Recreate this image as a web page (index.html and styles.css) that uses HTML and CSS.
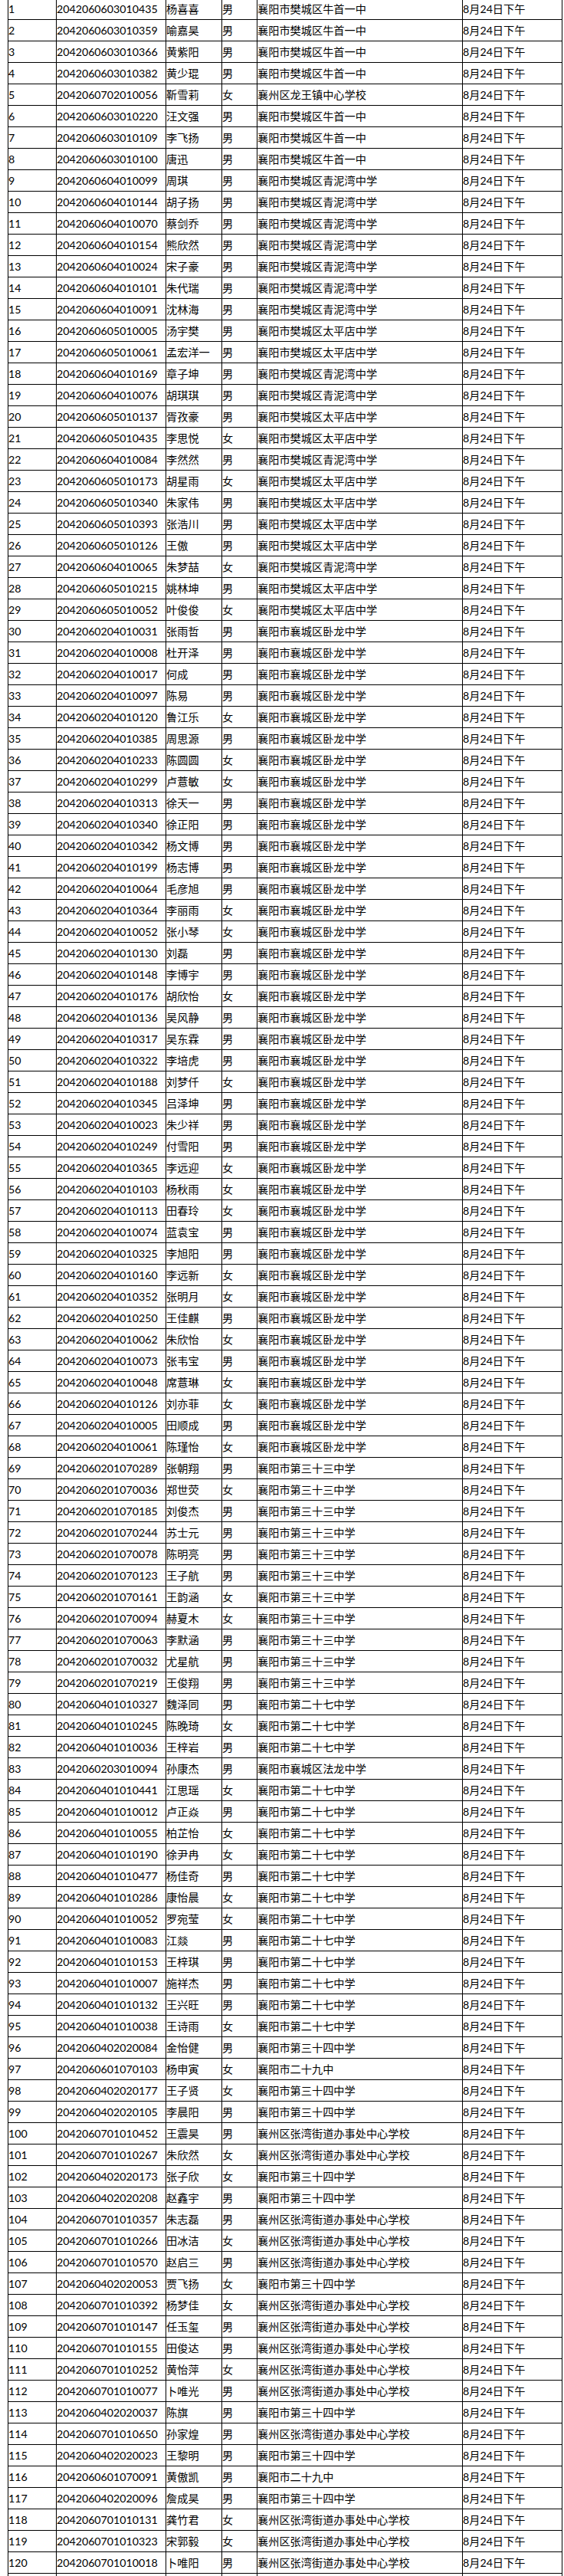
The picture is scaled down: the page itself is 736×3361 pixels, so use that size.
FILE: index.html
```html
<!DOCTYPE html>
<html lang="zh-CN">
<head>
<meta charset="utf-8">
<title>名单</title>
<link rel="stylesheet" href="styles.css">
</head>
<body>
<div class="sheet">
<div class="row"><span>1</span><span>2042060603010435</span><span>杨喜喜</span><span>男</span><span>襄阳市樊城区牛首一中</span><span>8月24日下午</span></div>
<div class="row"><span>2</span><span>2042060603010359</span><span>喻嘉昊</span><span>男</span><span>襄阳市樊城区牛首一中</span><span>8月24日下午</span></div>
<div class="row"><span>3</span><span>2042060603010366</span><span>黄紫阳</span><span>男</span><span>襄阳市樊城区牛首一中</span><span>8月24日下午</span></div>
<div class="row"><span>4</span><span>2042060603010382</span><span>黄少琨</span><span>男</span><span>襄阳市樊城区牛首一中</span><span>8月24日下午</span></div>
<div class="row"><span>5</span><span>2042060702010056</span><span>靳雪莉</span><span>女</span><span>襄州区龙王镇中心学校</span><span>8月24日下午</span></div>
<div class="row"><span>6</span><span>2042060603010220</span><span>汪文强</span><span>男</span><span>襄阳市樊城区牛首一中</span><span>8月24日下午</span></div>
<div class="row"><span>7</span><span>2042060603010109</span><span>李飞扬</span><span>男</span><span>襄阳市樊城区牛首一中</span><span>8月24日下午</span></div>
<div class="row"><span>8</span><span>2042060603010100</span><span>唐迅</span><span>男</span><span>襄阳市樊城区牛首一中</span><span>8月24日下午</span></div>
<div class="row"><span>9</span><span>2042060604010099</span><span>周琪</span><span>男</span><span>襄阳市樊城区青泥湾中学</span><span>8月24日下午</span></div>
<div class="row"><span>10</span><span>2042060604010144</span><span>胡子扬</span><span>男</span><span>襄阳市樊城区青泥湾中学</span><span>8月24日下午</span></div>
<div class="row"><span>11</span><span>2042060604010070</span><span>蔡剑乔</span><span>男</span><span>襄阳市樊城区青泥湾中学</span><span>8月24日下午</span></div>
<div class="row"><span>12</span><span>2042060604010154</span><span>熊欣然</span><span>男</span><span>襄阳市樊城区青泥湾中学</span><span>8月24日下午</span></div>
<div class="row"><span>13</span><span>2042060604010024</span><span>宋子豪</span><span>男</span><span>襄阳市樊城区青泥湾中学</span><span>8月24日下午</span></div>
<div class="row"><span>14</span><span>2042060604010101</span><span>朱代瑞</span><span>男</span><span>襄阳市樊城区青泥湾中学</span><span>8月24日下午</span></div>
<div class="row"><span>15</span><span>2042060604010091</span><span>沈林海</span><span>男</span><span>襄阳市樊城区青泥湾中学</span><span>8月24日下午</span></div>
<div class="row"><span>16</span><span>2042060605010005</span><span>汤宇樊</span><span>男</span><span>襄阳市樊城区太平店中学</span><span>8月24日下午</span></div>
<div class="row"><span>17</span><span>2042060605010061</span><span>孟宏洋一</span><span>男</span><span>襄阳市樊城区太平店中学</span><span>8月24日下午</span></div>
<div class="row"><span>18</span><span>2042060604010169</span><span>章子坤</span><span>男</span><span>襄阳市樊城区青泥湾中学</span><span>8月24日下午</span></div>
<div class="row"><span>19</span><span>2042060604010076</span><span>胡琪琪</span><span>男</span><span>襄阳市樊城区青泥湾中学</span><span>8月24日下午</span></div>
<div class="row"><span>20</span><span>2042060605010137</span><span>胥孜豪</span><span>男</span><span>襄阳市樊城区太平店中学</span><span>8月24日下午</span></div>
<div class="row"><span>21</span><span>2042060605010435</span><span>李思悦</span><span>女</span><span>襄阳市樊城区太平店中学</span><span>8月24日下午</span></div>
<div class="row"><span>22</span><span>2042060604010084</span><span>李然然</span><span>男</span><span>襄阳市樊城区青泥湾中学</span><span>8月24日下午</span></div>
<div class="row"><span>23</span><span>2042060605010173</span><span>胡星雨</span><span>女</span><span>襄阳市樊城区太平店中学</span><span>8月24日下午</span></div>
<div class="row"><span>24</span><span>2042060605010340</span><span>朱家伟</span><span>男</span><span>襄阳市樊城区太平店中学</span><span>8月24日下午</span></div>
<div class="row"><span>25</span><span>2042060605010393</span><span>张浩川</span><span>男</span><span>襄阳市樊城区太平店中学</span><span>8月24日下午</span></div>
<div class="row"><span>26</span><span>2042060605010126</span><span>王傲</span><span>男</span><span>襄阳市樊城区太平店中学</span><span>8月24日下午</span></div>
<div class="row"><span>27</span><span>2042060604010065</span><span>朱梦喆</span><span>女</span><span>襄阳市樊城区青泥湾中学</span><span>8月24日下午</span></div>
<div class="row"><span>28</span><span>2042060605010215</span><span>姚林坤</span><span>男</span><span>襄阳市樊城区太平店中学</span><span>8月24日下午</span></div>
<div class="row"><span>29</span><span>2042060605010052</span><span>叶俊俊</span><span>女</span><span>襄阳市樊城区太平店中学</span><span>8月24日下午</span></div>
<div class="row"><span>30</span><span>2042060204010031</span><span>张雨哲</span><span>男</span><span>襄阳市襄城区卧龙中学</span><span>8月24日下午</span></div>
<div class="row"><span>31</span><span>2042060204010008</span><span>杜开泽</span><span>男</span><span>襄阳市襄城区卧龙中学</span><span>8月24日下午</span></div>
<div class="row"><span>32</span><span>2042060204010017</span><span>何成</span><span>男</span><span>襄阳市襄城区卧龙中学</span><span>8月24日下午</span></div>
<div class="row"><span>33</span><span>2042060204010097</span><span>陈易</span><span>男</span><span>襄阳市襄城区卧龙中学</span><span>8月24日下午</span></div>
<div class="row"><span>34</span><span>2042060204010120</span><span>鲁江乐</span><span>女</span><span>襄阳市襄城区卧龙中学</span><span>8月24日下午</span></div>
<div class="row"><span>35</span><span>2042060204010385</span><span>周思源</span><span>男</span><span>襄阳市襄城区卧龙中学</span><span>8月24日下午</span></div>
<div class="row"><span>36</span><span>2042060204010233</span><span>陈圆圆</span><span>女</span><span>襄阳市襄城区卧龙中学</span><span>8月24日下午</span></div>
<div class="row"><span>37</span><span>2042060204010299</span><span>卢薏敏</span><span>女</span><span>襄阳市襄城区卧龙中学</span><span>8月24日下午</span></div>
<div class="row"><span>38</span><span>2042060204010313</span><span>徐天一</span><span>男</span><span>襄阳市襄城区卧龙中学</span><span>8月24日下午</span></div>
<div class="row"><span>39</span><span>2042060204010340</span><span>徐正阳</span><span>男</span><span>襄阳市襄城区卧龙中学</span><span>8月24日下午</span></div>
<div class="row"><span>40</span><span>2042060204010342</span><span>杨文博</span><span>男</span><span>襄阳市襄城区卧龙中学</span><span>8月24日下午</span></div>
<div class="row"><span>41</span><span>2042060204010199</span><span>杨志博</span><span>男</span><span>襄阳市襄城区卧龙中学</span><span>8月24日下午</span></div>
<div class="row"><span>42</span><span>2042060204010064</span><span>毛彦旭</span><span>男</span><span>襄阳市襄城区卧龙中学</span><span>8月24日下午</span></div>
<div class="row"><span>43</span><span>2042060204010364</span><span>李丽雨</span><span>女</span><span>襄阳市襄城区卧龙中学</span><span>8月24日下午</span></div>
<div class="row"><span>44</span><span>2042060204010052</span><span>张小琴</span><span>女</span><span>襄阳市襄城区卧龙中学</span><span>8月24日下午</span></div>
<div class="row"><span>45</span><span>2042060204010130</span><span>刘磊</span><span>男</span><span>襄阳市襄城区卧龙中学</span><span>8月24日下午</span></div>
<div class="row"><span>46</span><span>2042060204010148</span><span>李博宇</span><span>男</span><span>襄阳市襄城区卧龙中学</span><span>8月24日下午</span></div>
<div class="row"><span>47</span><span>2042060204010176</span><span>胡欣怡</span><span>女</span><span>襄阳市襄城区卧龙中学</span><span>8月24日下午</span></div>
<div class="row"><span>48</span><span>2042060204010136</span><span>吴风静</span><span>男</span><span>襄阳市襄城区卧龙中学</span><span>8月24日下午</span></div>
<div class="row"><span>49</span><span>2042060204010317</span><span>吴东霖</span><span>男</span><span>襄阳市襄城区卧龙中学</span><span>8月24日下午</span></div>
<div class="row"><span>50</span><span>2042060204010322</span><span>李培虎</span><span>男</span><span>襄阳市襄城区卧龙中学</span><span>8月24日下午</span></div>
<div class="row"><span>51</span><span>2042060204010188</span><span>刘梦仟</span><span>女</span><span>襄阳市襄城区卧龙中学</span><span>8月24日下午</span></div>
<div class="row"><span>52</span><span>2042060204010345</span><span>吕泽坤</span><span>男</span><span>襄阳市襄城区卧龙中学</span><span>8月24日下午</span></div>
<div class="row"><span>53</span><span>2042060204010023</span><span>朱少祥</span><span>男</span><span>襄阳市襄城区卧龙中学</span><span>8月24日下午</span></div>
<div class="row"><span>54</span><span>2042060204010249</span><span>付雪阳</span><span>男</span><span>襄阳市襄城区卧龙中学</span><span>8月24日下午</span></div>
<div class="row"><span>55</span><span>2042060204010365</span><span>李远迎</span><span>女</span><span>襄阳市襄城区卧龙中学</span><span>8月24日下午</span></div>
<div class="row"><span>56</span><span>2042060204010103</span><span>杨秋雨</span><span>女</span><span>襄阳市襄城区卧龙中学</span><span>8月24日下午</span></div>
<div class="row"><span>57</span><span>2042060204010113</span><span>田春玲</span><span>女</span><span>襄阳市襄城区卧龙中学</span><span>8月24日下午</span></div>
<div class="row"><span>58</span><span>2042060204010074</span><span>蓝袁宝</span><span>男</span><span>襄阳市襄城区卧龙中学</span><span>8月24日下午</span></div>
<div class="row"><span>59</span><span>2042060204010325</span><span>李旭阳</span><span>男</span><span>襄阳市襄城区卧龙中学</span><span>8月24日下午</span></div>
<div class="row"><span>60</span><span>2042060204010160</span><span>李远新</span><span>女</span><span>襄阳市襄城区卧龙中学</span><span>8月24日下午</span></div>
<div class="row"><span>61</span><span>2042060204010352</span><span>张明月</span><span>女</span><span>襄阳市襄城区卧龙中学</span><span>8月24日下午</span></div>
<div class="row"><span>62</span><span>2042060204010250</span><span>王佳麒</span><span>男</span><span>襄阳市襄城区卧龙中学</span><span>8月24日下午</span></div>
<div class="row"><span>63</span><span>2042060204010062</span><span>朱欣怡</span><span>女</span><span>襄阳市襄城区卧龙中学</span><span>8月24日下午</span></div>
<div class="row"><span>64</span><span>2042060204010073</span><span>张韦宝</span><span>男</span><span>襄阳市襄城区卧龙中学</span><span>8月24日下午</span></div>
<div class="row"><span>65</span><span>2042060204010048</span><span>席薏琳</span><span>女</span><span>襄阳市襄城区卧龙中学</span><span>8月24日下午</span></div>
<div class="row"><span>66</span><span>2042060204010126</span><span>刘亦菲</span><span>女</span><span>襄阳市襄城区卧龙中学</span><span>8月24日下午</span></div>
<div class="row"><span>67</span><span>2042060204010005</span><span>田顺成</span><span>男</span><span>襄阳市襄城区卧龙中学</span><span>8月24日下午</span></div>
<div class="row"><span>68</span><span>2042060204010061</span><span>陈瑾怡</span><span>女</span><span>襄阳市襄城区卧龙中学</span><span>8月24日下午</span></div>
<div class="row"><span>69</span><span>2042060201070289</span><span>张朝翔</span><span>男</span><span>襄阳市第三十三中学</span><span>8月24日下午</span></div>
<div class="row"><span>70</span><span>2042060201070036</span><span>郑世荧</span><span>女</span><span>襄阳市第三十三中学</span><span>8月24日下午</span></div>
<div class="row"><span>71</span><span>2042060201070185</span><span>刘俊杰</span><span>男</span><span>襄阳市第三十三中学</span><span>8月24日下午</span></div>
<div class="row"><span>72</span><span>2042060201070244</span><span>苏士元</span><span>男</span><span>襄阳市第三十三中学</span><span>8月24日下午</span></div>
<div class="row"><span>73</span><span>2042060201070078</span><span>陈明亮</span><span>男</span><span>襄阳市第三十三中学</span><span>8月24日下午</span></div>
<div class="row"><span>74</span><span>2042060201070123</span><span>王子航</span><span>男</span><span>襄阳市第三十三中学</span><span>8月24日下午</span></div>
<div class="row"><span>75</span><span>2042060201070161</span><span>王韵涵</span><span>女</span><span>襄阳市第三十三中学</span><span>8月24日下午</span></div>
<div class="row"><span>76</span><span>2042060201070094</span><span>赫夏木</span><span>女</span><span>襄阳市第三十三中学</span><span>8月24日下午</span></div>
<div class="row"><span>77</span><span>2042060201070063</span><span>李默涵</span><span>男</span><span>襄阳市第三十三中学</span><span>8月24日下午</span></div>
<div class="row"><span>78</span><span>2042060201070032</span><span>尤星航</span><span>男</span><span>襄阳市第三十三中学</span><span>8月24日下午</span></div>
<div class="row"><span>79</span><span>2042060201070219</span><span>王俊翔</span><span>男</span><span>襄阳市第三十三中学</span><span>8月24日下午</span></div>
<div class="row"><span>80</span><span>2042060401010327</span><span>魏泽同</span><span>男</span><span>襄阳市第二十七中学</span><span>8月24日下午</span></div>
<div class="row"><span>81</span><span>2042060401010245</span><span>陈晚琦</span><span>女</span><span>襄阳市第二十七中学</span><span>8月24日下午</span></div>
<div class="row"><span>82</span><span>2042060401010036</span><span>王梓岩</span><span>男</span><span>襄阳市第二十七中学</span><span>8月24日下午</span></div>
<div class="row"><span>83</span><span>2042060203010094</span><span>孙康杰</span><span>男</span><span>襄阳市襄城区法龙中学</span><span>8月24日下午</span></div>
<div class="row"><span>84</span><span>2042060401010441</span><span>江思瑶</span><span>女</span><span>襄阳市第二十七中学</span><span>8月24日下午</span></div>
<div class="row"><span>85</span><span>2042060401010012</span><span>卢正焱</span><span>男</span><span>襄阳市第二十七中学</span><span>8月24日下午</span></div>
<div class="row"><span>86</span><span>2042060401010055</span><span>柏芷怡</span><span>女</span><span>襄阳市第二十七中学</span><span>8月24日下午</span></div>
<div class="row"><span>87</span><span>2042060401010190</span><span>徐尹冉</span><span>女</span><span>襄阳市第二十七中学</span><span>8月24日下午</span></div>
<div class="row"><span>88</span><span>2042060401010477</span><span>杨佳奇</span><span>男</span><span>襄阳市第二十七中学</span><span>8月24日下午</span></div>
<div class="row"><span>89</span><span>2042060401010286</span><span>康怡晨</span><span>女</span><span>襄阳市第二十七中学</span><span>8月24日下午</span></div>
<div class="row"><span>90</span><span>2042060401010052</span><span>罗宛莹</span><span>女</span><span>襄阳市第二十七中学</span><span>8月24日下午</span></div>
<div class="row"><span>91</span><span>2042060401010083</span><span>江燚</span><span>男</span><span>襄阳市第二十七中学</span><span>8月24日下午</span></div>
<div class="row"><span>92</span><span>2042060401010153</span><span>王梓琪</span><span>男</span><span>襄阳市第二十七中学</span><span>8月24日下午</span></div>
<div class="row"><span>93</span><span>2042060401010007</span><span>施祥杰</span><span>男</span><span>襄阳市第二十七中学</span><span>8月24日下午</span></div>
<div class="row"><span>94</span><span>2042060401010132</span><span>王兴旺</span><span>男</span><span>襄阳市第二十七中学</span><span>8月24日下午</span></div>
<div class="row"><span>95</span><span>2042060401010038</span><span>王诗雨</span><span>女</span><span>襄阳市第二十七中学</span><span>8月24日下午</span></div>
<div class="row"><span>96</span><span>2042060402020084</span><span>金怡健</span><span>男</span><span>襄阳市第三十四中学</span><span>8月24日下午</span></div>
<div class="row"><span>97</span><span>2042060601070103</span><span>杨申寅</span><span>女</span><span>襄阳市二十九中</span><span>8月24日下午</span></div>
<div class="row"><span>98</span><span>2042060402020177</span><span>王子贤</span><span>女</span><span>襄阳市第三十四中学</span><span>8月24日下午</span></div>
<div class="row"><span>99</span><span>2042060402020105</span><span>李晨阳</span><span>男</span><span>襄阳市第三十四中学</span><span>8月24日下午</span></div>
<div class="row"><span>100</span><span>2042060701010452</span><span>王震昊</span><span>男</span><span>襄州区张湾街道办事处中心学校</span><span>8月24日下午</span></div>
<div class="row"><span>101</span><span>2042060701010267</span><span>朱欣然</span><span>女</span><span>襄州区张湾街道办事处中心学校</span><span>8月24日下午</span></div>
<div class="row"><span>102</span><span>2042060402020173</span><span>张子欣</span><span>女</span><span>襄阳市第三十四中学</span><span>8月24日下午</span></div>
<div class="row"><span>103</span><span>2042060402020208</span><span>赵鑫宇</span><span>男</span><span>襄阳市第三十四中学</span><span>8月24日下午</span></div>
<div class="row"><span>104</span><span>2042060701010357</span><span>朱志磊</span><span>男</span><span>襄州区张湾街道办事处中心学校</span><span>8月24日下午</span></div>
<div class="row"><span>105</span><span>2042060701010266</span><span>田冰洁</span><span>女</span><span>襄州区张湾街道办事处中心学校</span><span>8月24日下午</span></div>
<div class="row"><span>106</span><span>2042060701010570</span><span>赵启三</span><span>男</span><span>襄州区张湾街道办事处中心学校</span><span>8月24日下午</span></div>
<div class="row"><span>107</span><span>2042060402020053</span><span>贾飞扬</span><span>女</span><span>襄阳市第三十四中学</span><span>8月24日下午</span></div>
<div class="row"><span>108</span><span>2042060701010392</span><span>杨梦佳</span><span>女</span><span>襄州区张湾街道办事处中心学校</span><span>8月24日下午</span></div>
<div class="row"><span>109</span><span>2042060701010147</span><span>任玉玺</span><span>男</span><span>襄州区张湾街道办事处中心学校</span><span>8月24日下午</span></div>
<div class="row"><span>110</span><span>2042060701010155</span><span>田俊达</span><span>男</span><span>襄州区张湾街道办事处中心学校</span><span>8月24日下午</span></div>
<div class="row"><span>111</span><span>2042060701010252</span><span>黄怡萍</span><span>女</span><span>襄州区张湾街道办事处中心学校</span><span>8月24日下午</span></div>
<div class="row"><span>112</span><span>2042060701010077</span><span>卜唯光</span><span>男</span><span>襄州区张湾街道办事处中心学校</span><span>8月24日下午</span></div>
<div class="row"><span>113</span><span>2042060402020037</span><span>陈旗</span><span>男</span><span>襄阳市第三十四中学</span><span>8月24日下午</span></div>
<div class="row"><span>114</span><span>2042060701010650</span><span>孙家煌</span><span>男</span><span>襄州区张湾街道办事处中心学校</span><span>8月24日下午</span></div>
<div class="row"><span>115</span><span>2042060402020023</span><span>王黎明</span><span>男</span><span>襄阳市第三十四中学</span><span>8月24日下午</span></div>
<div class="row"><span>116</span><span>2042060601070091</span><span>黄傲凯</span><span>男</span><span>襄阳市二十九中</span><span>8月24日下午</span></div>
<div class="row"><span>117</span><span>2042060402020096</span><span>詹成昊</span><span>男</span><span>襄阳市第三十四中学</span><span>8月24日下午</span></div>
<div class="row"><span>118</span><span>2042060701010131</span><span>龚竹君</span><span>女</span><span>襄州区张湾街道办事处中心学校</span><span>8月24日下午</span></div>
<div class="row"><span>119</span><span>2042060701010323</span><span>宋郭毅</span><span>女</span><span>襄州区张湾街道办事处中心学校</span><span>8月24日下午</span></div>
<div class="row"><span>120</span><span>2042060701010018</span><span>卜唯阳</span><span>男</span><span>襄州区张湾街道办事处中心学校</span><span>8月24日下午</span></div>
<div class="row stub"><span></span><span></span><span></span><span></span><span></span><span></span></div>
</div>
</body>
</html>
```
FILE: styles.css
```css
* {
  box-sizing: border-box;
}

html,
body {
  margin: 0;
  padding: 0;
  background: #ffffff;
}

.sheet {
  width: 724px;
  margin: -3px 0 0 10px;
  border-top: 1px solid #000000;
  border-left: 1px solid #000000;
  font-family: Lato, "Noto Sans CJK SC", sans-serif;
  font-size: 14.2px;
  color: #000000;
}

.row {
  display: grid;
  grid-template-columns: 63px 143px 73px 46px 268px 130px;
  height: 28px;
}

.row > span {
  border-right: 1px solid #000000;
  border-bottom: 1px solid #000000;
  padding: 0;
  line-height: 27px;
  white-space: nowrap;
  overflow: hidden;
}

.row.stub {
  height: 3px;
}

.row.stub > span {
  border-bottom: none;
}
```
